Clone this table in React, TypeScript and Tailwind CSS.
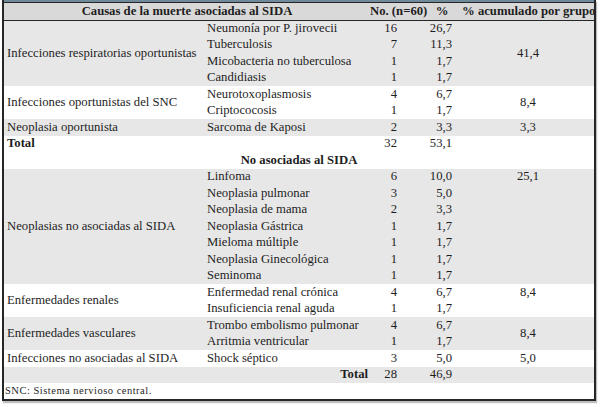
import React from 'react';

type Row = {
  group?: { text: string; span: number };
  cause: string;
  n: string;
  pct: string;
  acc?: { text: string; span: number };
  gray: boolean;
};

const asociadas: Row[] = [
  { group: { text: 'Infecciones respiratorias oportunistas', span: 4 }, cause: 'Neumonía por P. jirovecii', n: '16', pct: '26,7', acc: { text: '41,4', span: 4 }, gray: true },
  { cause: 'Tuberculosis', n: '7', pct: '11,3', gray: true },
  { cause: 'Micobacteria no tuberculosa', n: '1', pct: '1,7', gray: true },
  { cause: 'Candidiasis', n: '1', pct: '1,7', gray: true },
  { group: { text: 'Infecciones oportunistas del SNC', span: 2 }, cause: 'Neurotoxoplasmosis', n: '4', pct: '6,7', acc: { text: '8,4', span: 2 }, gray: false },
  { cause: 'Criptococosis', n: '1', pct: '1,7', gray: false },
  { group: { text: 'Neoplasia oportunista', span: 1 }, cause: 'Sarcoma de Kaposi', n: '2', pct: '3,3', acc: { text: '3,3', span: 1 }, gray: true },
];

const noAsociadas: Row[] = [
  { group: { text: 'Neoplasias no asociadas al SIDA', span: 7 }, cause: 'Linfoma', n: '6', pct: '10,0', acc: { text: '25,1', span: 1 }, gray: true },
  { cause: 'Neoplasia pulmonar', n: '3', pct: '5,0', acc: { text: '', span: 1 }, gray: true },
  { cause: 'Neoplasia de mama', n: '2', pct: '3,3', acc: { text: '', span: 1 }, gray: true },
  { cause: 'Neoplasia Gástrica', n: '1', pct: '1,7', acc: { text: '', span: 1 }, gray: true },
  { cause: 'Mieloma múltiple', n: '1', pct: '1,7', acc: { text: '', span: 1 }, gray: true },
  { cause: 'Neoplasia Ginecológica', n: '1', pct: '1,7', acc: { text: '', span: 1 }, gray: true },
  { cause: 'Seminoma', n: '1', pct: '1,7', acc: { text: '', span: 1 }, gray: true },
  { group: { text: 'Enfermedades renales', span: 2 }, cause: 'Enfermedad renal crónica', n: '4', pct: '6,7', acc: { text: '8,4', span: 1 }, gray: false },
  { cause: 'Insuficiencia renal aguda', n: '1', pct: '1,7', acc: { text: '', span: 1 }, gray: false },
  { group: { text: 'Enfermedades vasculares', span: 2 }, cause: 'Trombo embolismo pulmonar', n: '4', pct: '6,7', acc: { text: '8,4', span: 2 }, gray: true },
  { cause: 'Arritmia ventricular', n: '1', pct: '1,7', gray: true },
  { group: { text: 'Infecciones no asociadas al SIDA', span: 1 }, cause: 'Shock séptico', n: '3', pct: '5,0', acc: { text: '5,0', span: 1 }, gray: false },
];

function DataRow({ r }: { r: Row }) {
  return (
    <tr className={`h-[16.5px] ${r.gray ? 'bg-[#e7e7e7]' : 'bg-white'}`}>
      {r.group && (
        <td rowSpan={r.group.span} className="pl-[3px] align-middle">
          {r.group.text}
        </td>
      )}
      <td className="pl-[3px]">{r.cause}</td>
      <td className="pr-[25px] text-right">{r.n}</td>
      <td className="pr-[10px] text-right">{r.pct}</td>
      {r.acc && (
        <td rowSpan={r.acc.span} className="text-center align-middle">
          {r.acc.text}
        </td>
      )}
    </tr>
  );
}

export default function App() {
  return (
    <div className="w-[600px] h-[407px] bg-white pl-[2px]">
      <div className="w-[594px] border-x-2 border-b-2 border-[#262626] shadow-[1px_2px_1px_rgba(0,0,0,0.25)]">
        <div className="h-[2px] bg-[#6f8b9b]" />
        <div className="pr-[2px] border-t border-[#262626]">
          <table
            className="w-[590px] table-fixed border-collapse text-[12.7px] leading-none text-[#1e1e1e]"
            style={{ fontFamily: '"Liberation Serif", "Times New Roman", serif' }}
          >
            <colgroup>
              <col className="w-[200px]" />
              <col className="w-[166px]" />
              <col className="w-[52px]" />
              <col className="w-[40px]" />
              <col />
            </colgroup>
            <thead>
              <tr className="h-[17px] bg-[#d9d9d9] font-bold border-b-[1.5px] border-[#262626]">
                <th colSpan={2} className="text-center">Causas de la muerte asociadas al SIDA</th>
                <th className="text-right pr-[2px] whitespace-nowrap">No. (n=60)</th>
                <th className="text-center">%</th>
                <th className="text-center whitespace-nowrap">% acumulado por grupo</th>
              </tr>
            </thead>
            <tbody>
              {asociadas.map((r) => (
                <DataRow key={r.cause} r={r} />
              ))}
              <tr className="h-[16.5px] bg-white">
                <td className="pl-[3px] font-bold">Total</td>
                <td />
                <td className="pr-[25px] text-right">32</td>
                <td className="pr-[10px] text-right">53,1</td>
                <td />
              </tr>
              <tr className="h-[16.5px] bg-white">
                <td colSpan={5} className="text-center font-bold">No asociadas al SIDA</td>
              </tr>
              {noAsociadas.map((r) => (
                <DataRow key={r.cause} r={r} />
              ))}
              <tr className="h-[16.5px] bg-[#e7e7e7]">
                <td />
                <td className="pr-[2px] text-right font-bold">Total</td>
                <td className="pr-[25px] text-right">28</td>
                <td className="pr-[10px] text-right">46,9</td>
                <td />
              </tr>
              <tr className="h-[16px] bg-white">
                <td colSpan={5} className="pl-[1px] text-[10.5px] tracking-[0.5px]">SNC: Sistema nervioso central.</td>
              </tr>
            </tbody>
          </table>
        </div>
      </div>
    </div>
  );
}
